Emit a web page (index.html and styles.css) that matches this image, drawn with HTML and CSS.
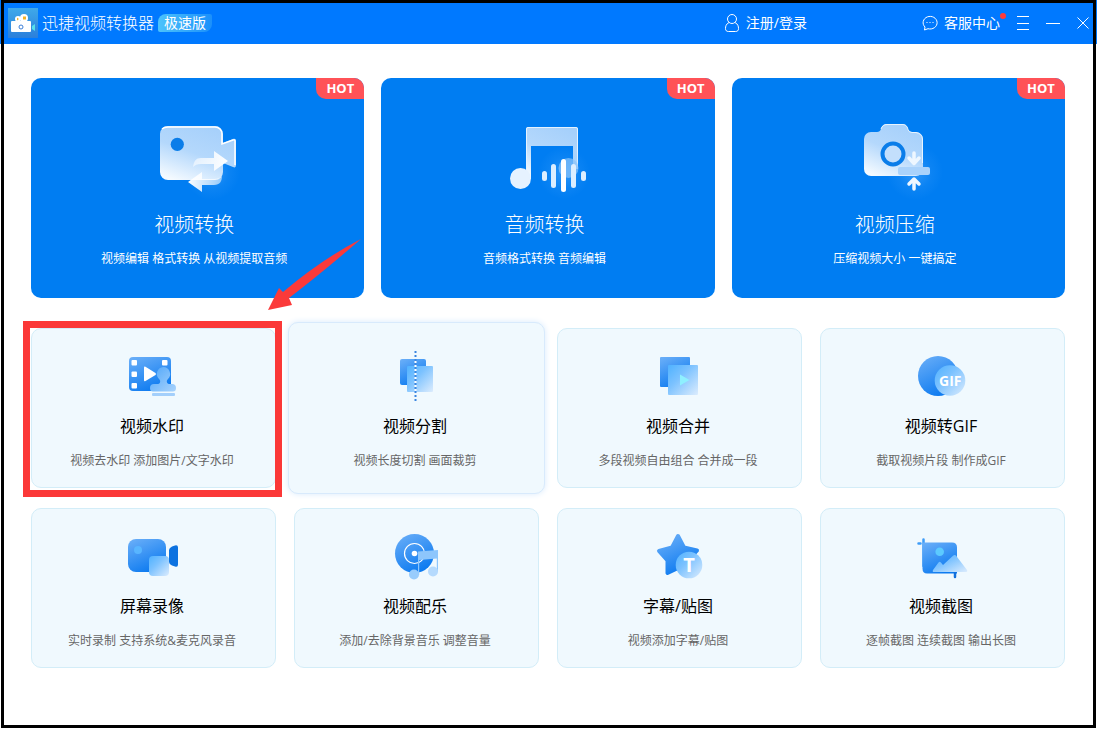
FILE: index.html
```html
<!DOCTYPE html>
<html lang="zh-CN">
<head>
  <meta charset="UTF-8" />
  <meta name="viewport" content="width=device-width, initial-scale=1" />
  <title>迅捷视频转换器</title>
  <link rel="stylesheet" href="styles.css">
</head>
<body>

  <!-- Shared gradients -->
  <svg class="defs" aria-hidden="true">
    <defs>
      <linearGradient id="glass" x1="0.7" y1="0" x2="0.2" y2="1">
        <stop offset="0" stop-color="#a6d0fb" />
        <stop offset="0.5" stop-color="#b4d8fc" />
        <stop offset="1" stop-color="#f4faff" />
      </linearGradient>
      <linearGradient id="fade" x1="0" y1="0" x2="1" y2="0">
        <stop offset="0" stop-color="#ffffff" stop-opacity="0.55" />
        <stop offset="1" stop-color="#ffffff" />
      </linearGradient>
      <linearGradient id="fadeLeft" x1="0" y1="0" x2="1" y2="0">
        <stop offset="0" stop-color="#ffffff" />
        <stop offset="1" stop-color="#ffffff" stop-opacity="0.55" />
      </linearGradient>
      <linearGradient id="deep" x1="0.1" y1="0" x2="0.6" y2="1">
        <stop offset="0" stop-color="#69aef8" />
        <stop offset="1" stop-color="#0c7af0" />
      </linearGradient>
      <linearGradient id="soft" x1="0" y1="0" x2="1" y2="1">
        <stop offset="0" stop-color="#4fb2ff" />
        <stop offset="0.4" stop-color="#7cc2ff" />
        <stop offset="1" stop-color="#dcecfd" />
      </linearGradient>
      <linearGradient id="stamp" x1="0" y1="0" x2="1" y2="1">
        <stop offset="0" stop-color="#4ea6fa" />
        <stop offset="1" stop-color="#a9d3fc" />
      </linearGradient>
      <radialGradient id="glow">
        <stop offset="0" stop-color="#5cb0ff" stop-opacity="0.5" />
        <stop offset="0.6" stop-color="#5cb0ff" stop-opacity="0.12" />
        <stop offset="1" stop-color="#5cb0ff" stop-opacity="0" />
      </radialGradient>
      <linearGradient id="logoBg" x1="0" y1="0" x2="0" y2="1">
        <stop offset="0" stop-color="#3fa9ea" />
        <stop offset="1" stop-color="#2b7fdb" />
      </linearGradient>
    </defs>
  </svg>

  <div class="window">
    <header class="titlebar">
      <div class="brand">
        <svg class="logo" viewBox="0 0 30 30" aria-hidden="true">
          <rect width="30" height="30" fill="url(#logoBg)" />
          <circle cx="10" cy="11" r="3" fill="#fff" />
          <circle cx="16" cy="10" r="4" fill="#fff" />
          <path d="M9 9.500l2 1.500-2 1.500zM15 8.500h3v3h-3z" fill="#f2b429" />
          <rect x="3" y="13" width="20" height="11" rx="1" fill="#fff" />
          <path d="M24 18l3-2v7l-3-2z" fill="#56e0ea" />
          <circle cx="13" cy="19" r="2" fill="none" stroke="#3c7fd8" />
        </svg>
        <h1>迅捷视频转换器</h1>
        <span class="edition">极速版</span>
      </div>

      <a class="bar-link login" href="#login">
        <svg class="icon-user" viewBox="0 0 16 20" aria-hidden="true">
          <circle cx="8" cy="6" r="4.500" />
          <path d="M5 9.500C2 11 1.500 13.500 1.500 15.500c0 2 1 3 3 3h7c2 0 3-1 3-3 0-2-.5-4.500-3.500-6" />
        </svg>
        注册/登录
      </a>
      <a class="bar-link support" href="#support">
        <svg class="icon-chat" viewBox="0 0 16 16" aria-hidden="true">
          <path d="M2.500 15l.5-3A7 6.300 0 1 1 6 13.700z" />
          <path class="dots" d="M4.500 7.500h1M7.500 7.500h1M10.500 7.500h1" />
        </svg>
        客服中心
        <span class="dot"></span>
      </a>
      <div class="controls">
        <button type="button" aria-label="菜单">
          <svg viewBox="0 0 14 14"><path d="M1 .5h12M1 7.500h12M1 13.500h12" /></svg>
        </button>
        <button type="button" aria-label="最小化">
          <svg viewBox="0 0 14 14"><path d="M0 7.500h14" /></svg>
        </button>
        <button type="button" aria-label="关闭">
          <svg viewBox="0 0 14 14"><path d="M1.500 1.500l11 11M12.500 1.500l-11 11" /></svg>
        </button>
      </div>
    </header>

    <main>
      <section class="hero-grid">
        <a class="hero" href="#video-convert">
          <span class="hot">HOT</span>
          <svg class="hero-icon" viewBox="0 0 100 84" aria-hidden="true">
            <circle cx="68" cy="56" r="28" fill="url(#glow)" />
            <path d="M24 10h47a8 8 0 0 1 8 8v9l10-4c2-.6 3 0 3 2v24c0 2-1 3-3 2l-10-4v9a8 8 0 0 1-8 8H24a8 8 0 0 1-8-8V18a8 8 0 0 1 8-8z" fill="url(#glass)" />
            <path d="M18 13q2-2 6-2h47a7 7 0 0 1 7 7v10l11-4q2-.5 2 1v24" fill="none" stroke="#fff" stroke-width="1.500" />
            <circle cx="33.300" cy="28.300" r="6.600" fill="#0a7de9" />
            <path d="M49 51c1-6 3-9 8-9h13v-7l14 10-14 10v-7H57c-4 0-6 1-8 3z" fill="url(#fade)" />
            <path d="M78 60c0 5-2 9-8 9H58v7L44 66l14-10v7h12c4 0 6-1 8-3z" fill="url(#fadeLeft)" />
          </svg>
          <h2>视频转换</h2>
          <p>视频编辑 格式转换 从视频提取音频</p>
        </a>

        <a class="hero" href="#audio-convert">
          <span class="hot">HOT</span>
          <svg class="hero-icon" viewBox="0 0 100 84" aria-hidden="true">
            <path d="M34 11h48q2 0 2 2v40h-5V30H37v33h-5V13q0-2 2-2z" fill="url(#glass)" />
            <path d="M32.500 60V13q0-1.500 1.500-1.500h48q1.500 0 1.500 1.500v38" fill="none" stroke="#e4f2ff" />
            <circle cx="26.500" cy="62.500" r="10.500" fill="#e6f2ff" />
            <circle cx="70" cy="57" r="26" fill="url(#glow)" />
            <circle cx="74.500" cy="52" r="10" fill="#8cc5fb" opacity="0.7" />
            <g fill="#dceeff">
              <rect x="48" y="55" width="5" height="10" rx="2.500" />
              <rect x="57" y="48" width="5" height="24" rx="2.500" />
              <rect x="67" y="43" width="5" height="33" rx="2.500" fill="#fff" />
              <rect x="77" y="48" width="5" height="24" rx="2.500" />
              <rect x="87" y="55" width="5" height="10" rx="2.500" />
            </g>
          </svg>
          <h2>音频转换</h2>
          <p>音频格式转换 音频编辑</p>
        </a>

        <a class="hero" href="#video-compress">
          <span class="hot">HOT</span>
          <svg class="hero-icon" viewBox="0 0 100 84" aria-hidden="true">
            <circle cx="70" cy="56" r="28" fill="url(#glow)" />
            <path d="M26 16h6q3 0 4-3c1-4 3-5 6-5h15c3 0 5 1 6 5q1 3 4 3h4a7 7 0 0 1 7 7v30a7 7 0 0 1-7 7H26a7 7 0 0 1-7-7V23a7 7 0 0 1 7-7z" fill="url(#glass)" />
            <path d="M36 13c1-3 3-4.500 6-4.500h15c3 0 5 1 6 5q1 3 4 3h4q6 1 6.500 6.500v24" fill="none" stroke="#e8f4ff" />
            <circle cx="48" cy="38" r="10.500" fill="#c3dffc" stroke="#0a7de9" stroke-width="4" />
            <rect x="53" y="51" width="32" height="8" rx="2" fill="#a9d2fb" />
            <g fill="none" stroke="#eef7ff" stroke-width="3.500" stroke-linecap="round" stroke-linejoin="round">
              <path d="M69 37v10M64 42l5 5.500 5-5.500" />
              <path d="M69 73V63M64 68l5-5 5 5" />
            </g>
          </svg>
          <h2>视频压缩</h2>
          <p>压缩视频大小 一键搞定</p>
        </a>
      </section>

      <section class="tile-grid">
        <a class="tile" href="#watermark">
          <svg class="tile-icon" viewBox="0 0 60 60" aria-hidden="true">
            <rect x="7" y="11" width="42" height="34" rx="4" fill="url(#deep)" />
            <g fill="#fff">
              <rect x="9.500" y="14" width="5.500" height="5.500" rx="1" />
              <rect x="9.500" y="25.500" width="5.500" height="5.500" rx="1" />
              <rect x="9.500" y="37" width="5.500" height="5.500" rx="1" />
              <rect x="40" y="14" width="5.500" height="5.500" rx="1" />
              <path d="M22 21.500q0-1.500 1.500-.7l10 6.200q1 1 0 2l-10 6q-1.500.8-1.500-.7z" />
            </g>
            <path d="M41.300 21a7 7 0 0 1 4.700 12c-1 1-1.500 2-1 3.500.5 1 1.500 1.500 3 1.500h2q4 0 4 4 0 3.500-3 3.500H31q-3 0-3-3.500 0-4 4-4h3c1.500 0 2.500-.5 3-1.500.5-1.500 0-2.500-1-3.500a7 7 0 0 1 4.300-12z" fill="url(#stamp)" />
            <rect x="30" y="47" width="23" height="3" rx="1" fill="#a3cffb" />
          </svg>
          <h3>视频水印</h3>
          <p>视频去水印 添加图片/文字水印</p>
          <span class="marker"></span>
          <svg class="arrow" viewBox="0 0 93 71" aria-hidden="true">
            <path d="M93 0Q54 20 15 53l-4-4L0 71l24-5-3-7Q55 33 93 0z" fill="#fb3a3a" />
          </svg>
        </a>

        <a class="tile raised" href="#split">
          <svg class="tile-icon" viewBox="0 0 60 60" aria-hidden="true">
            <rect x="15" y="13" width="26" height="26" rx="2" fill="url(#deep)" />
            <rect x="22" y="20" width="26" height="26" rx="1" fill="url(#soft)" />
            <path d="M30.500 5v50" stroke="#3a86e0" stroke-width="2" stroke-dasharray="2 2" />
            <path d="M30.500 15v30" stroke="#fff" stroke-width="2" stroke-dasharray="2 2" />
          </svg>
          <h3>视频分割</h3>
          <p>视频长度切割 画面裁剪</p>
        </a>

        <a class="tile" href="#merge">
          <svg class="tile-icon" viewBox="0 0 60 60" aria-hidden="true">
            <rect x="12" y="11" width="30" height="30" rx="1" fill="url(#deep)" />
            <rect x="20" y="19" width="30" height="30" rx="1" fill="url(#soft)" />
            <path d="M32 28.500l9.500 5.500-9.500 5.500z" fill="#8ff0ff" />
          </svg>
          <h3>视频合并</h3>
          <p>多段视频自由组合 合并成一段</p>
        </a>

        <a class="tile" href="#gif">
          <svg class="tile-icon" viewBox="0 0 60 60" aria-hidden="true">
            <circle cx="27" cy="30" r="20" fill="url(#deep)" />
            <circle cx="39" cy="34.500" r="15.300" fill="url(#soft)" />
            <text x="28" y="40" class="gif-text">GIF</text>
          </svg>
          <h3>视频转GIF</h3>
          <p>截取视频片段 制作成GIF</p>
        </a>

        <a class="tile" href="#record">
          <svg class="tile-icon" viewBox="0 0 60 60" aria-hidden="true">
            <rect x="6" y="13" width="38" height="33" rx="8" fill="url(#deep)" />
            <circle cx="16" cy="24" r="4" fill="#58b5ff" />
            <path d="M47 24q0-2 3-3.500l3-1q3-.7 3 2v17q0 3-3 2l-3-1q-3-1.500-3-3.500z" fill="#0c72e0" />
            <rect x="27" y="30" width="20" height="20" rx="4" fill="url(#soft)" />
          </svg>
          <h3>屏幕录像</h3>
          <p>实时录制 支持系统&amp;麦克风录音</p>
        </a>

        <a class="tile" href="#music">
          <svg class="tile-icon" viewBox="0 0 60 60" aria-hidden="true">
            <circle cx="29.500" cy="27.500" r="19.500" fill="url(#deep)" />
            <circle cx="29.500" cy="27.500" r="10" fill="none" stroke="#fff" stroke-width="1.200" />
            <circle cx="29.500" cy="27.500" r="2.800" fill="#fff" />
            <path d="M33 25.500l20-1.500v22h-1.200V32.500L34.200 34v15H33z" fill="#8dc6fc" />
            <circle cx="29" cy="48.500" r="5" fill="#98ccfc" />
            <circle cx="48" cy="45.500" r="5" fill="#b5dafd" />
          </svg>
          <h3>视频配乐</h3>
          <p>添加/去除背景音乐 调整音量</p>
        </a>

        <a class="tile" href="#subtitle">
          <svg class="tile-icon" viewBox="0 0 60 60" aria-hidden="true">
            <path d="M30 10l6 11.500L49 24.500l-9 10 1.500 12L30 42l-10.500 5V34.500L11 25l13-3.500z" fill="url(#deep)" stroke="url(#deep)" stroke-width="4" stroke-linejoin="round" />
            <circle cx="41" cy="39" r="13.300" fill="url(#soft)" />
            <text x="41" y="46" class="t-text">T</text>
          </svg>
          <h3>字幕/贴图</h3>
          <p>视频添加字幕/贴图</p>
        </a>

        <a class="tile" href="#capture">
          <svg class="tile-icon" viewBox="0 0 60 60" aria-hidden="true">
            <path d="M7.500 17.500h2M12.500 13.500V40" fill="none" stroke="#3c9cf8" stroke-width="2.500" stroke-linecap="round" />
            <path d="M11.500 16.500H41q5 0 5 5v26H16q-4.500 0-4.500-5z" fill="url(#deep)" />
            <path d="M44 45v6" stroke="#1270dc" stroke-width="2.500" stroke-linecap="round" />
            <circle cx="28.700" cy="25.700" r="4.300" fill="#5ccaff" />
            <path d="M23 46q-2 0-1-2l5.500-7.500q1.200-1.500 2.400 0L32 39l10-9.300q2-1.500 3.500.5L56 44q1 2-1.500 2z" fill="url(#soft)" />
          </svg>
          <h3>视频截图</h3>
          <p>逐帧截图 连续截图 输出长图</p>
        </a>
      </section>
    </main>
  </div>

</body>
</html>
```

FILE: styles.css
```css
* {
  box-sizing: border-box;
  margin: 0;
  padding: 0;
}

body {
  font-family: "Open Sans", "Noto Sans CJK SC", sans-serif;
  background: #fff linear-gradient(#0079ff, #0079ff) no-repeat top / 100% 44px;
}

a {
  color: inherit;
  text-decoration: none;
}

.defs {
  position: absolute;
  width: 0;
  height: 0;
}

.window {
  margin: 0 1px;
  min-height: calc(100vh - 1px);
  border: 3px solid #000;
}

/* Title bar */
.titlebar {
  display: flex;
  align-items: center;
  height: 41px;
  padding: 0 3px 2px 4px;
  background: #0079ff;
  color: #fff;
}

.brand {
  display: flex;
  align-items: center;
  gap: 4px;
  margin-right: auto;
}

.logo {
  width: 30px;
  height: 30px;
}

.brand h1 {
  font-size: 16px;
  font-weight: 300;
  line-height: 24px;
}

.edition {
  padding: 0 6px;
  border-radius: 8px 2px 8px 2px;
  background: linear-gradient(90deg, #4cc3fb, #1b90fb);
  font-size: 14px;
  line-height: 18px;
}

.bar-link {
  position: relative;
  display: flex;
  align-items: center;
  gap: 6px;
  font-size: 14px;
  line-height: 20px;
}

.bar-link svg,
.controls svg {
  fill: none;
  stroke: #fff;
  stroke-width: 1;
}

.login {
  margin-right: 115px;
}

.icon-user {
  width: 16px;
  height: 20px;
}

.icon-chat {
  width: 16px;
  height: 16px;
}

.dot {
  position: absolute;
  top: 0;
  right: -6px;
  width: 6px;
  height: 6px;
  border-radius: 50%;
  background: #ff3b3b;
}

.controls {
  display: flex;
  gap: 16px;
  margin-left: 16px;
}

.controls button {
  width: 14px;
  height: 14px;
  border: none;
  background: none;
  cursor: pointer;
}

.controls svg {
  display: block;
  width: 14px;
  height: 14px;
}

/* Content */
main {
  padding: 34px 28px 56px 27px;
}

.hero-grid {
  display: grid;
  grid-template-columns: repeat(3, 1fr);
  gap: 17px;
}

.hero {
  position: relative;
  display: flex;
  flex-direction: column;
  align-items: center;
  min-height: 220px;
  padding: 38px 7px 0 0;
  border-radius: 10px;
  background: #007df2;
  color: #fff;
}

.hero-icon {
  width: 100px;
  height: 84px;
}

.hero h2 {
  margin-top: 9px;
  font-size: 20px;
  font-weight: 300;
  line-height: 32px;
}

.hero p {
  margin-top: 8px;
  font-size: 12px;
  line-height: 20px;
}

.hot {
  position: absolute;
  top: 0;
  right: 0;
  width: 48px;
  border-radius: 0 10px 0 10px;
  background: #ff5257;
  font-size: 13px;
  font-weight: 700;
  line-height: 21px;
  text-align: center;
}

.tile-grid {
  display: grid;
  grid-template-columns: repeat(4, 1fr);
  gap: 20px 18px;
  margin-top: 30px;
}

.tile {
  position: relative;
  display: flex;
  flex-direction: column;
  align-items: center;
  min-height: 160px;
  padding: 17px 3px 0 0;
  border: 1px solid #d3edf8;
  border-radius: 10px;
  background: #f0f9fe;
}

.tile-icon {
  width: 60px;
  height: 60px;
}

.tile h3 {
  margin-top: 8px;
  color: #000;
  font-size: 16px;
  font-weight: 400;
  line-height: 24px;
}

.tile p {
  margin-top: 13px;
  color: #666;
  font-size: 12px;
  line-height: 20px;
}

.raised {
  z-index: 0;
}

.raised::before {
  content: "";
  position: absolute;
  inset: -7px;
  z-index: -1;
  border: 1px solid #d8eafc;
  border-radius: 10px;
  background: #f0f9fe;
  box-shadow: 0 0 6px #d8eafc;
}

.marker {
  position: absolute;
  inset: -8px -7px -10px -9px;
  z-index: 1;
  border: 7px solid #fb3838;
}

.arrow {
  position: absolute;
  top: -90px;
  right: -86px;
  z-index: 1;
  width: 93px;
  height: 71px;
}

.gif-text,
.t-text {
  fill: #fff;
  font-size: 14px;
  font-weight: 700;
}

.t-text {
  font-size: 20px;
  text-anchor: middle;
}

@media (max-width: 800px) {
  .hero-grid {
    grid-template-columns: 1fr;
  }

  .tile-grid {
    grid-template-columns: repeat(2, 1fr);
  }

  .login {
    margin-right: 24px;
  }
}
```
